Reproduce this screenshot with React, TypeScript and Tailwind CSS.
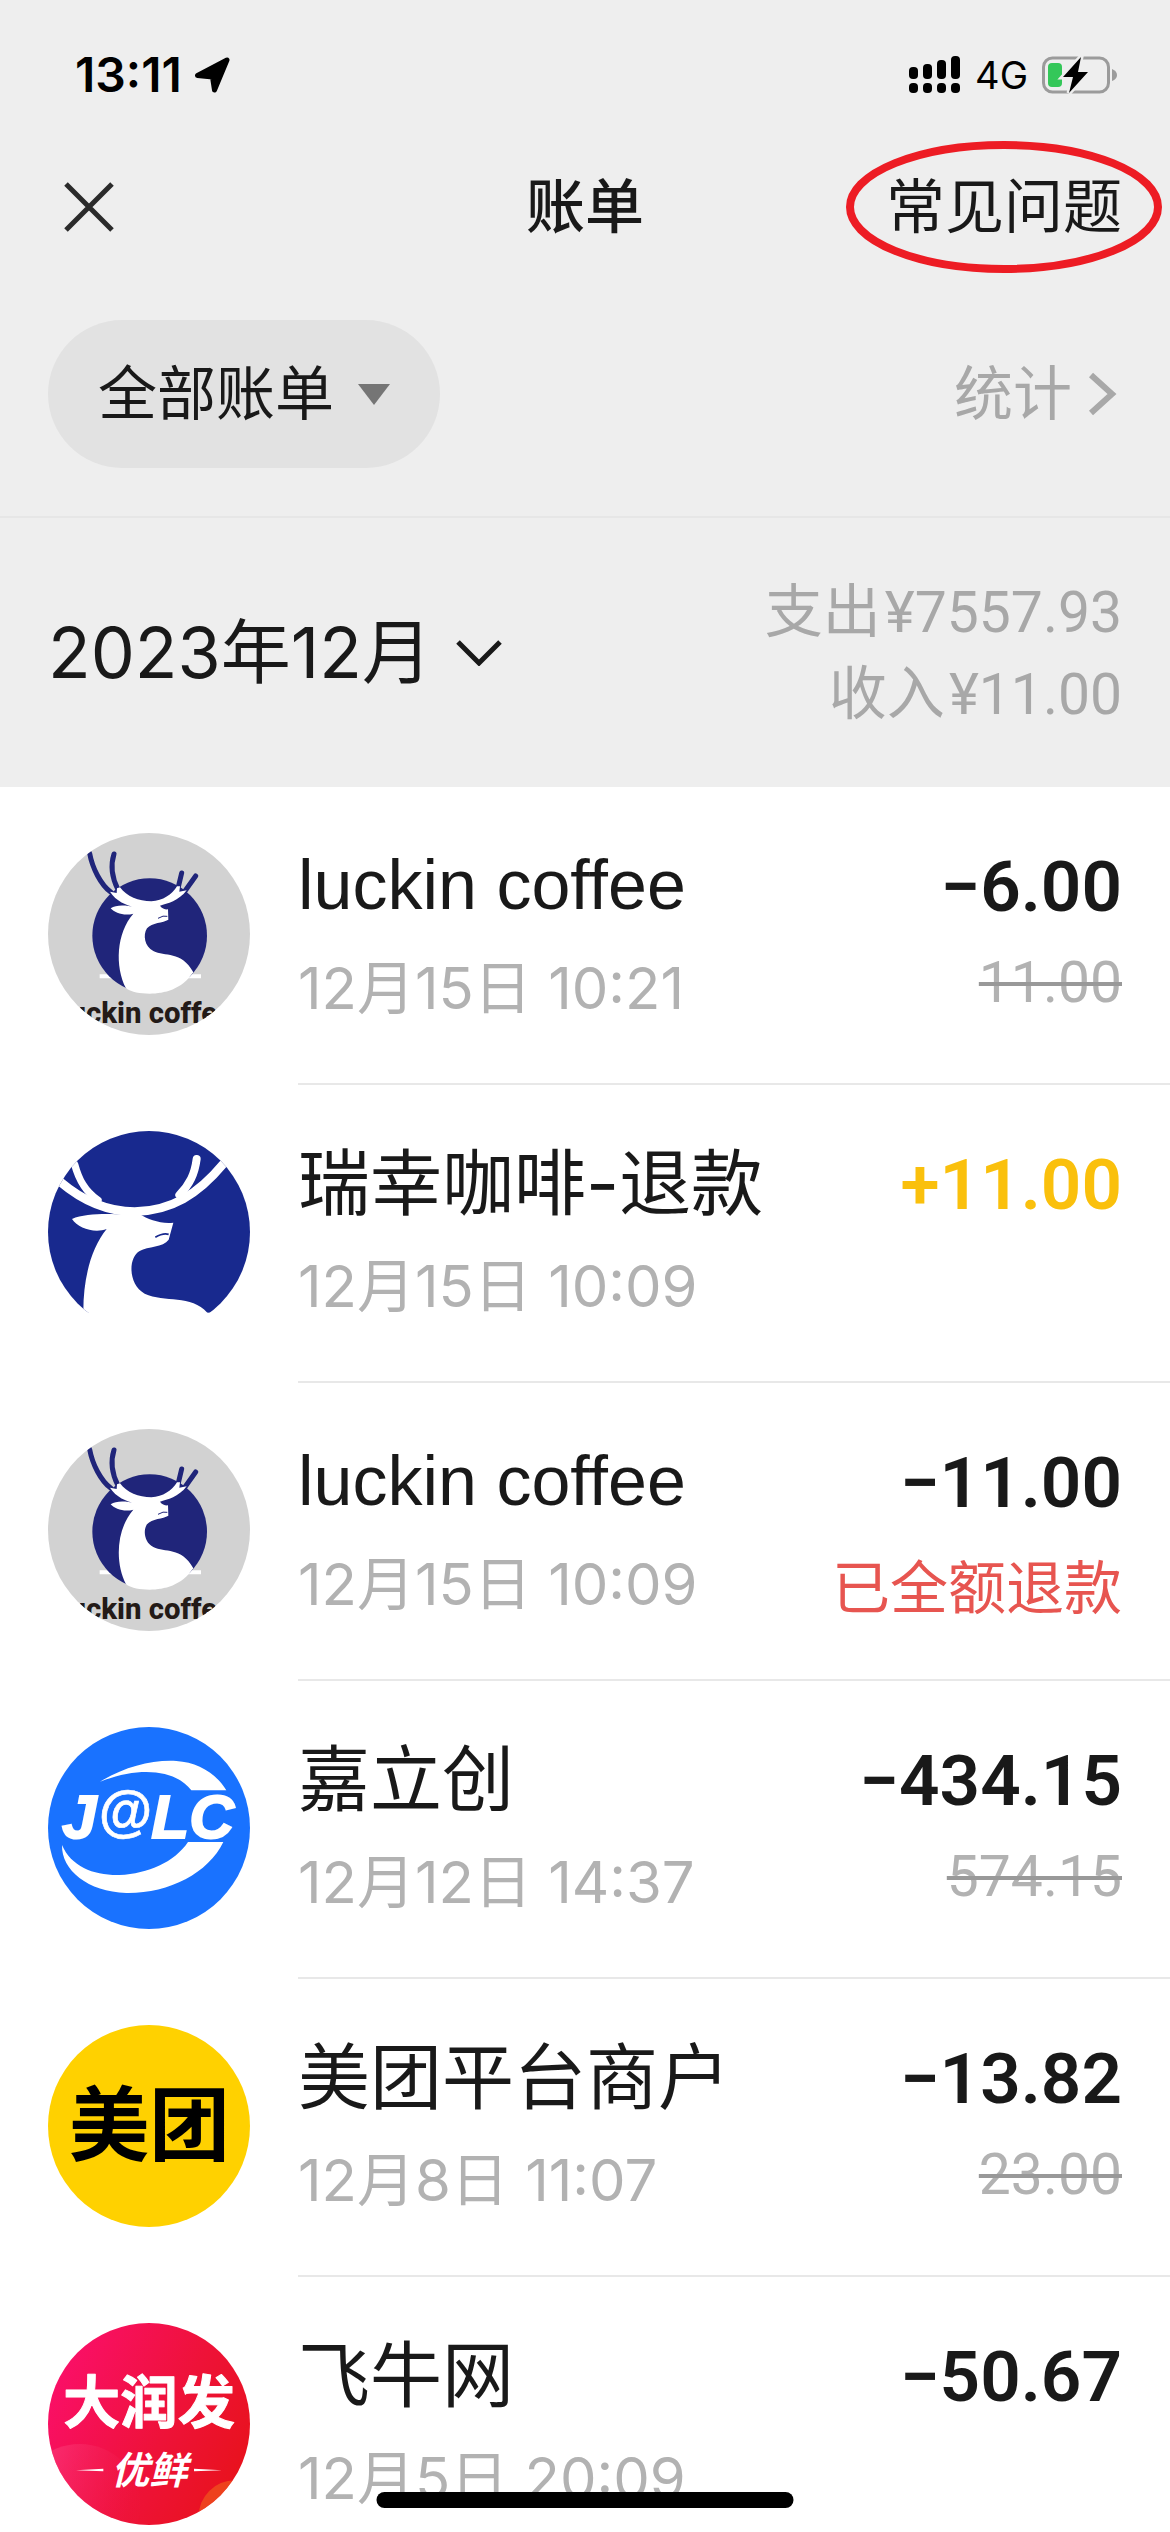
import React from "react";

function LuckinLogo() {
  return (
    <svg viewBox="0 0 606 606" className="block size-full">
      <rect width="606" height="606" fill="#d2d2d2" />
      <path d="M155 424 H175 L205 436 H155Z M430 424 H459 V436 H420Z" fill="#fff" />
      <circle cx="305" cy="308" r="172" fill="#20257a" />
      <g fill="none" stroke="#20257a" strokeWidth="15" strokeLinecap="round">
        <path d="M125 61 C133 105 158 155 189 178" />
        <path d="M198 63 C186 100 195 140 210 170" />
        <path d="M401 120 L390 166" />
        <path d="M443 129 L411 174" />
      </g>
      <path
        d="M186 176 L206 180 L207 166 L216 163 C236 190 272 205 310 205 C345 203 372 185 387 160 L396 160 L394 176 L416 172 C392 204 358 212 336 218 C342 227 352 230 360 229 L361 260 C345 270 312 268 297 286 C284 305 290 342 316 354 C350 372 400 352 436 418 C400 470 350 482 305 482 C275 482 252 478 234 466 C200 400 205 300 256 242 C230 250 200 240 188 226 C205 214 232 216 262 222 C235 218 204 204 186 176Z"
        fill="#fff"
      />
      <path d="M330 256 Q346 246 358 250" stroke="#20257a" strokeWidth="3" fill="none" />
      <text
        x="298"
        y="571"
        textAnchor="middle"
        fontSize="88"
        fontWeight="800"
        fill="#231a17"
        className="font-[Roboto,sans-serif]"
      >
        luckin coffee
      </text>
    </svg>
  );
}

function DeerLogo() {
  return (
    <svg viewBox="0 0 606 606" className="block size-full bg-white">
      <rect width="606" height="545" fill="#18298e" />
      <g fill="none" stroke="#fff" strokeLinecap="round">
        <path d="M36 152 C110 215 180 242 260 242 C370 240 450 190 525 100" strokeWidth="26" />
        <path d="M80 100 C92 145 110 180 150 208" strokeWidth="22" />
        <path d="M446 84 C440 130 425 160 394 192" strokeWidth="24" />
      </g>
      <path
        d="M205 250 C160 248 105 250 72 264 C90 292 140 308 176 294 C130 350 106 440 106 540 L106 606 H560 L478 545 C430 490 350 515 290 488 C240 460 240 380 275 360 C300 345 345 350 362 326 L376 275 C340 280 300 265 275 250Z"
        fill="#fff"
      />
      <path d="M322 319 Q345 305 362 310" stroke="#18298e" strokeWidth="5" fill="none" />
    </svg>
  );
}

function JlcLogo() {
  return (
    <svg viewBox="0 0 606 606" className="block size-full">
      <rect width="606" height="606" fill="#1972ff" />
      <path d="M156 164 C230 120 310 98 385 102 C450 106 505 140 535 190 H430 C385 130 280 115 156 164Z" fill="#fff" />
      <path d="M42 354 C70 420 140 446 215 444 C300 440 380 405 420 345 H526 C480 440 360 500 235 498 C120 494 40 430 42 354Z" fill="#fff" />
      <g
        fill="#fff"
        stroke="#fff"
        fontStyle="italic"
        fontWeight="700"
        className="font-['Liberation_Sans',Arial,sans-serif]"
      >
        <text x="42" y="333" fontSize="186" strokeWidth="6">J</text>
        <text x="150" y="310" fontSize="164" strokeWidth="2">@</text>
        <text x="310" y="333" fontSize="186" strokeWidth="6">L</text>
        <text x="424" y="333" fontSize="186" strokeWidth="6">C</text>
      </g>
    </svg>
  );
}

function MeituanLogo() {
  return (
    <svg viewBox="0 0 606 606" className="block size-full">
      <rect width="606" height="606" fill="#ffd100" />
      <text
        x="304"
        y="388"
        textAnchor="middle"
        fontSize="242"
        fontWeight="700"
        fill="#000"
        className="font-['Noto_Sans_CJK_SC',sans-serif]"
      >
        美团
      </text>
    </svg>
  );
}

function RtMartLogo() {
  return (
    <svg viewBox="0 0 606 606" className="block size-full">
      <defs>
        <linearGradient id="rt" x1="0" y1="0.2" x2="1" y2="0.7">
          <stop offset="0" stopColor="#fb0f6c" />
          <stop offset="0.6" stopColor="#ee1238" />
          <stop offset="1" stopColor="#e8121c" />
        </linearGradient>
        <linearGradient id="hill" x1="0" y1="0" x2="1" y2="0.3">
          <stop offset="0" stopColor="#ff4a8c" stopOpacity="0.75" />
          <stop offset="1" stopColor="#f01a48" stopOpacity="0.1" />
        </linearGradient>
      </defs>
      <rect width="606" height="606" fill="url(#rt)" />
      <circle cx="95" cy="545" r="182" fill="url(#hill)" />
      <circle cx="560" cy="580" r="108" fill="#f0571c" opacity="0.7" />
      <g fill="#fff" textAnchor="middle" className="font-['Noto_Sans_CJK_SC',sans-serif]">
        <text x="303" y="300" fontSize="172" fontWeight="700" stroke="#fff" strokeWidth="3" strokeLinejoin="round">大润发</text>
        <text x="304" y="484" fontSize="114" fontWeight="700" fontStyle="italic">优鲜</text>
      </g>
      <path d="M84 442 L166 437 V445Z M438 437 L522 442 L438 445Z" fill="#fff" />
    </svg>
  );
}

type Bill = {
  logo: () => React.JSX.Element;
  name: string;
  latin?: boolean;
  time: string;
  amount: string;
  income?: boolean;
  original?: string;
  refund?: string;
};

const bills: Bill[] = [
  { logo: LuckinLogo, name: "luckin coffee", latin: true, time: "12月15日 10:21", amount: "−6.00", original: "11.00" },
  { logo: DeerLogo, name: "瑞幸咖啡-退款", time: "12月15日 10:09", amount: "+11.00", income: true },
  { logo: LuckinLogo, name: "luckin coffee", latin: true, time: "12月15日 10:09", amount: "−11.00", refund: "已全额退款" },
  { logo: JlcLogo, name: "嘉立创", time: "12月12日 14:37", amount: "−434.15", original: "574.15" },
  { logo: MeituanLogo, name: "美团平台商户", time: "12月8日 11:07", amount: "−13.82", original: "23.00" },
  { logo: RtMartLogo, name: "飞牛网", time: "12月5日 20:09", amount: "−50.67" },
];

function StatusBar() {
  return (
    <div className="flex h-[150px] items-center justify-between pr-[52px] pl-[75px] text-black">
      <div className="flex items-center gap-3">
        <span className="text-[48px] leading-[60px] font-semibold">13:11</span>
        <svg viewBox="0 0 36 36" className="size-9">
          <path d="M33 3 L20.500 33 L18.500 20 L3.500 18.500Z" fill="#000" stroke="#000" strokeWidth="5" strokeLinejoin="round" />
        </svg>
      </div>
      <div className="flex items-center gap-3.5">
        <svg viewBox="0 0 52 38" className="h-[38px] w-[52px]">
          <rect x="0" y="11" width="9" height="12" rx="4" />
          <rect x="14" y="8" width="9" height="15" rx="4" />
          <rect x="28" y="4" width="9" height="19" rx="4" />
          <rect x="42" y="0" width="9" height="23" rx="4" />
          <rect x="0" y="27" width="9" height="10" rx="4" />
          <rect x="14" y="27" width="9" height="10" rx="4" />
          <rect x="28" y="27" width="9" height="10" rx="4" />
          <rect x="42" y="27" width="9" height="10" rx="4" />
        </svg>
        <span className="text-[38px] leading-[60px]">4G</span>
        <svg viewBox="0 0 76 38" className="h-[38px] w-[76px]">
          <rect x="1.500" y="2" width="65" height="34" rx="9" fill="none" stroke="#9b9b9b" strokeWidth="3" />
          <path d="M70 13 Q75 15 75 19 Q75 23 70 25Z" fill="#9b9b9b" />
          <rect x="6" y="7" width="14" height="24" rx="4" fill="#34c759" />
          <path d="M39 1 L21 21 H31 L27 37 L46 16 H36Z" fill="#000" stroke="#eee" strokeWidth="5" paintOrder="stroke" />
        </svg>
      </div>
    </div>
  );
}

function SummaryLine({ label, value }: { label: string; value: string }) {
  return (
    <p className="flex items-baseline justify-end gap-1 leading-[81px]">
      <span className="text-[58px]">{label}</span>
      <span className="font-[Roboto,sans-serif] text-[57px]">{value}</span>
    </p>
  );
}

export default function App() {
  return (
    <div className="relative flex h-screen flex-col overflow-hidden bg-[#eee] font-[Inter,'Noto_Sans_CJK_SC',sans-serif] text-[#191919]">
      <StatusBar />

      <header className="grid h-[114px] grid-cols-3 items-center px-12">
        <button aria-label="关闭" className="flex size-20 items-center pl-4">
          <svg viewBox="0 0 50 50" className="size-[50px]">
            <path d="M2 2 L48 48 M48 2 L2 48" stroke="#2b2b2b" strokeWidth="5" />
          </svg>
        </button>
        <h1 className="text-center text-[59px] leading-[80px] font-medium">账单</h1>
        <div className="relative justify-self-end">
          <button className="text-[59px] leading-[80px]">常见问题</button>
          <svg
            viewBox="0 0 316 132"
            className="pointer-events-none absolute top-1/2 left-1/2 h-[132px] w-[316px] -translate-x-1/2 -translate-y-1/2"
          >
            <ellipse cx="158" cy="66" rx="154" ry="62" fill="none" stroke="#ed1c24" strokeWidth="8" />
          </svg>
        </div>
      </header>

      <div className="flex h-[254px] shrink-0 items-center justify-between border-b-2 border-[#e6e6e6] px-12 pt-2">
        <button className="flex h-[148px] items-center gap-6 rounded-full bg-[#e2e2e2] px-[50px] text-[59px] leading-[80px]">
          全部账单
          <svg viewBox="0 0 32 21" className="h-[21px] w-8">
            <path d="M0 0 H32 L16 21Z" fill="#757575" />
          </svg>
        </button>
        <button className="flex items-center gap-4 pr-1 text-[59px] leading-[80px] text-[#a8a8a8]">
          统计
          <svg viewBox="0 0 30 44" className="h-11 w-[30px]">
            <path d="M3 3 L24 22 L3 41" fill="none" stroke="#a8a8a8" strokeWidth="6" />
          </svg>
        </button>
      </div>

      <div className="flex h-[269px] shrink-0 items-center justify-between px-12">
        <button className="flex items-center gap-6 text-[70px] leading-[90px]">
          2023年12月
          <svg viewBox="0 0 46 26" className="h-[26px] w-[46px]">
            <path d="M2 2 L23 23 L44 2" fill="none" stroke="#191919" strokeWidth="5" />
          </svg>
        </button>
        <div className="text-[#a8a8a8]">
          <SummaryLine label="支出" value="¥7557.93" />
          <SummaryLine label="收入" value="¥11.00" />
        </div>
      </div>

      <ul className="flex-1 overflow-hidden bg-white">
        {bills.map((bill, index) => (
          <li key={index} className="flex h-[298px] pl-12">
            <div className="mt-[46px] mr-12 size-[202px] shrink-0 overflow-hidden rounded-full">
              <bill.logo />
            </div>
            <div className="flex flex-1 justify-between border-b-2 border-[#e8e8e8] pt-12 pr-12">
              <div>
                <p
                  className={
                    bill.latin
                      ? "font-['Liberation_Sans',Arial,sans-serif] text-[70px] leading-[100px]"
                      : "text-[72px] leading-[100px]"
                  }
                >
                  {bill.name}
                </p>
                <p className="text-[58px] leading-[106px] text-[#b2b2b2]">{bill.time}</p>
              </div>
              <div className="text-right font-[Roboto,'Noto_Sans_CJK_SC',sans-serif]">
                <p
                  className={
                    bill.income
                      ? "text-[71px] leading-[104px] font-semibold text-[#fac00c]"
                      : "text-[71px] leading-[104px] font-semibold"
                  }
                >
                  {bill.amount}
                </p>
                {bill.original && (
                  <p className="text-[57px] leading-[88px] text-[#b2b2b2] line-through decoration-[#999] decoration-4">
                    {bill.original}
                  </p>
                )}
                {bill.refund && <p className="text-[58px] leading-[108px] text-[#e75550]">{bill.refund}</p>}
              </div>
            </div>
          </li>
        ))}
      </ul>

      <div className="absolute bottom-6 left-1/2 h-4 w-[417px] -translate-x-1/2 rounded-full bg-black" />
    </div>
  );
}
